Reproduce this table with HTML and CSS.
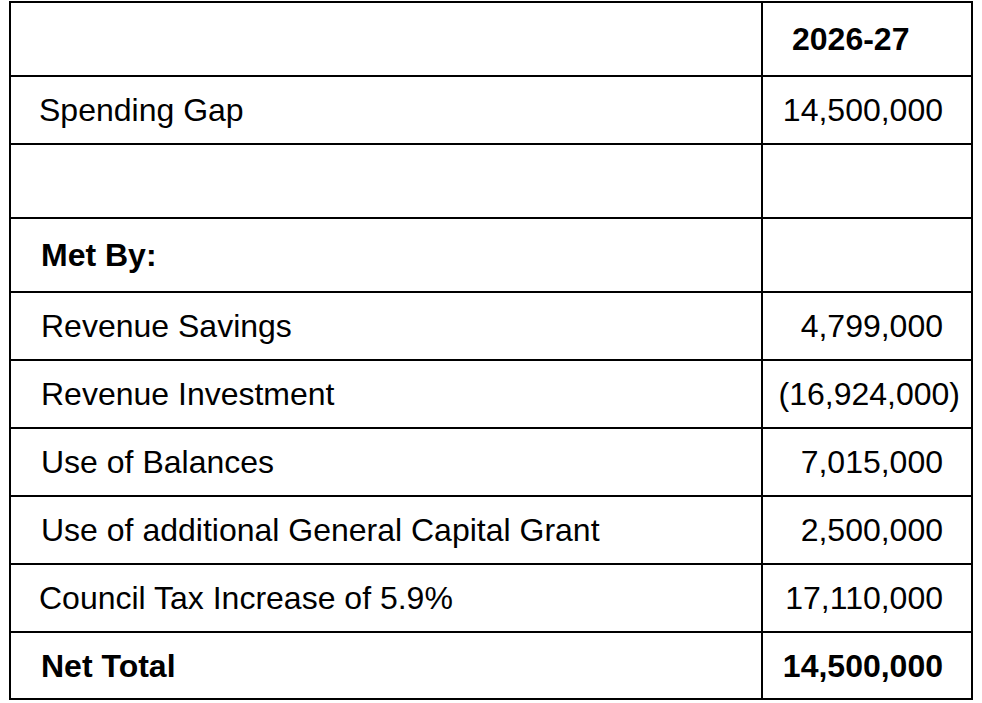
FILE: index.html
```html
<!DOCTYPE html>
<html lang="en">
<head>
<meta charset="utf-8">
<title>Budget 2026-27</title>
<link rel="stylesheet" href="styles.css">
</head>
<body>
<div class="budget" role="table">
  <div class="cell label head" role="cell"></div>
  <div class="cell value head strong" role="columnheader">2026-27</div>

  <div class="cell label tight" role="cell">Spending Gap</div>
  <div class="cell value num" role="cell">14,500,000</div>

  <div class="cell label" role="cell"></div>
  <div class="cell value" role="cell"></div>

  <div class="cell label strong" role="cell">Met By:</div>
  <div class="cell value" role="cell"></div>

  <div class="cell label" role="cell">Revenue Savings</div>
  <div class="cell value num" role="cell">4,799,000</div>

  <div class="cell label" role="cell">Revenue Investment</div>
  <div class="cell value num neg" role="cell">(16,924,000)</div>

  <div class="cell label" role="cell">Use of Balances</div>
  <div class="cell value num" role="cell">7,015,000</div>

  <div class="cell label" role="cell">Use of additional General Capital Grant</div>
  <div class="cell value num" role="cell">2,500,000</div>

  <div class="cell label tight" role="cell">Council Tax Increase of 5.9%</div>
  <div class="cell value num" role="cell">17,110,000</div>

  <div class="cell label strong" role="cell">Net Total</div>
  <div class="cell value num strong" role="cell">14,500,000</div>
</div>
</body>
</html>
```

FILE: styles.css
```css
html, body {
  margin: 0;
  padding: 0;
  background: #ffffff;
}

body {
  font-family: "Liberation Sans", Arial, sans-serif;
  color: #000000;
}

.budget {
  display: grid;
  grid-template-columns: 750px 208px;
  grid-template-rows: 72px 66px 72px 72px 66px 66px 66px 66px 66px 65px;
  gap: 2px;
  padding: 2px;
  background: #000000;
  width: 964px;
  box-sizing: border-box;
  margin: 1px 0 0 9px;
}

.cell {
  background: #ffffff;
  display: flex;
  align-items: center;
  font-size: 32px;
  line-height: 1;
  white-space: nowrap;
}

.label {
  padding-left: 30px;
}

.label.tight {
  padding-left: 28px;
}

.value {
  padding-left: 29px;
}

.value.num {
  justify-content: flex-end;
  padding-left: 0;
  padding-right: 28px;
}

.value.num.neg {
  padding-right: 11px;
}

.strong {
  font-weight: bold;
}
```
